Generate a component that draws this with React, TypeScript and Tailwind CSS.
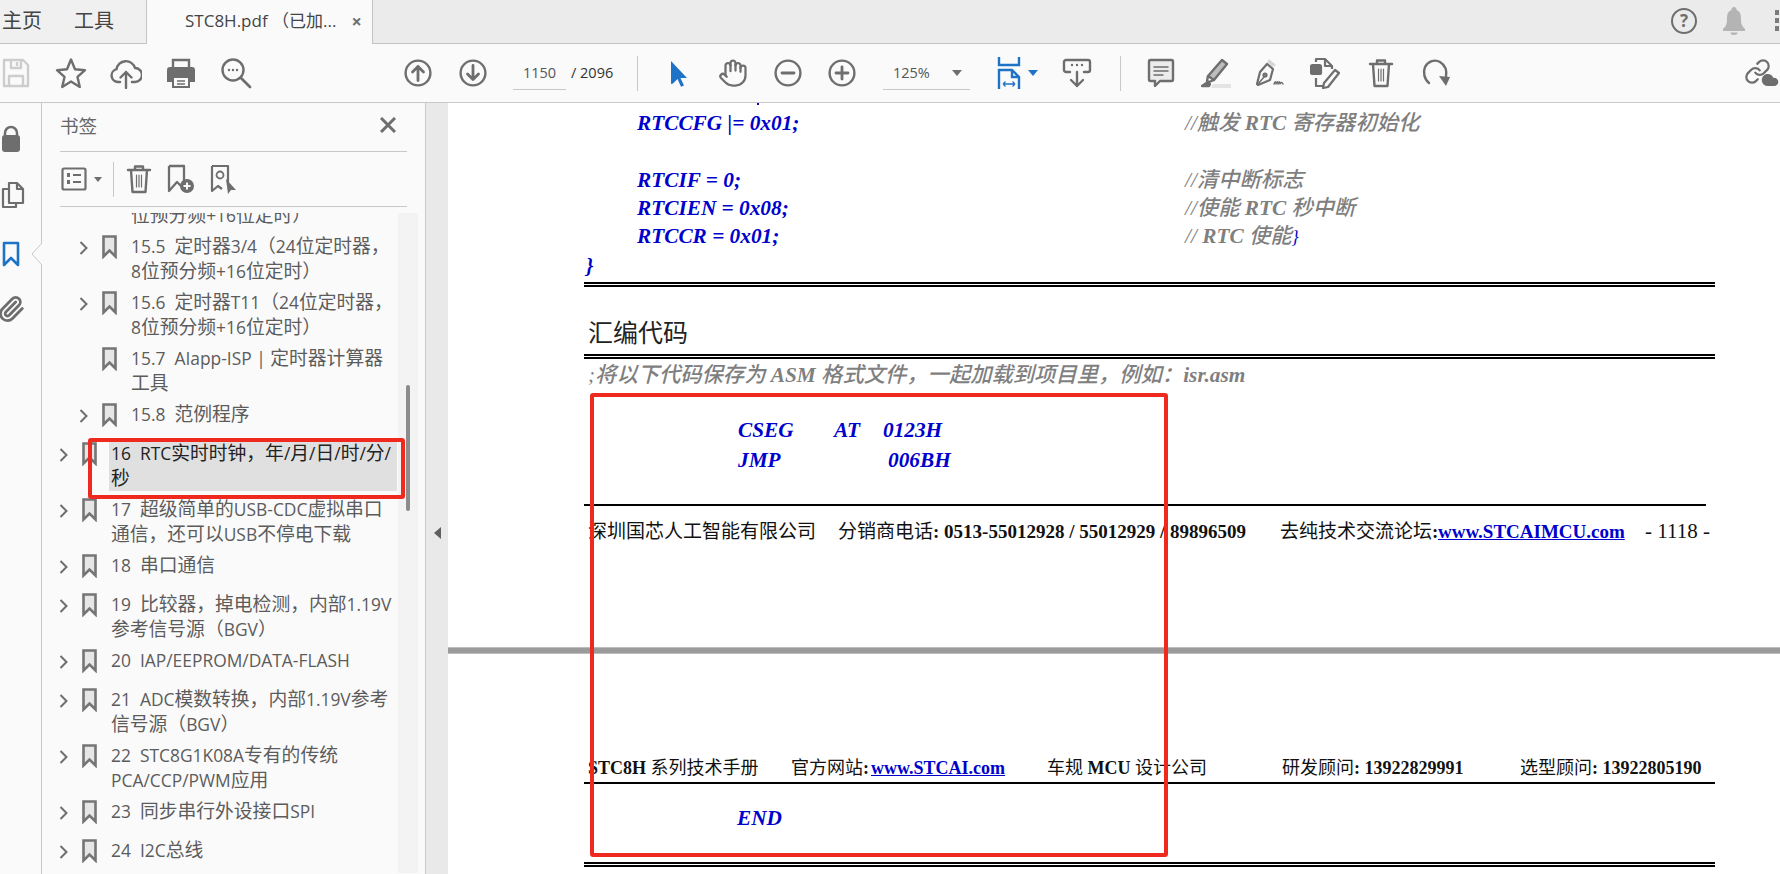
import type { ReactNode } from "react";
import { Hand, Link, Cloud, Paperclip } from "lucide-react";

const bookmarks = [
    { level: 2, arrow: true, lines: ["15.5  定时器3/4（24位定时器，", "8位预分频+16位定时）"] },
    { level: 2, arrow: true, lines: ["15.6  定时器T11（24位定时器，", "8位预分频+16位定时）"] },
    { level: 2, arrow: false, lines: ["15.7  AIapp-ISP | 定时器计算器", "工具"] },
    { level: 2, arrow: true, lines: ["15.8  范例程序"] },
    { level: 1, arrow: true, active: true, lines: ["16  RTC实时时钟，年/月/日/时/分/", "秒"] },
    { level: 1, arrow: true, lines: ["17  超级简单的USB-CDC虚拟串口", "通信，还可以USB不停电下载"] },
    { level: 1, arrow: true, lines: ["18  串口通信"] },
    { level: 1, arrow: true, lines: ["19  比较器，掉电检测，内部1.19V", "参考信号源（BGV）"] },
    { level: 1, arrow: true, lines: ["20  IAP/EEPROM/DATA-FLASH"] },
    { level: 1, arrow: true, lines: ["21  ADC模数转换，内部1.19V参考", "信号源（BGV）"] },
    { level: 1, arrow: true, lines: ["22  STC8G1K08A专有的传统", "PCA/CCP/PWM应用"] },
    { level: 1, arrow: true, lines: ["23  同步串行外设接口SPI"] },
    { level: 1, arrow: true, lines: ["24  I2C总线"] },
];

// CJK runs sit a little larger than the latin text in the reader's UI font
function Mixed({ text }: { text: string }) {
    return (
        <>
            {text.split(/([\u3000-\u30ff\u4e00-\u9fff\uff00-\uffef]+)/).map((part, i) =>
                i % 2 ? (
                    <span key={i} className="text-[18.8px]">
                        {part}
                    </span>
                ) : (
                    part
                ),
            )}
        </>
    );
}

function Icon({ children, w = 32, h = 32, className = "" }: { children: ReactNode; w?: number; h?: number; className?: string }) {
    return (
        <svg
            width={w}
            height={h}
            viewBox={`0 0 ${w} ${h}`}
            fill="none"
            stroke="#6e6e6e"
            strokeWidth="2.4"
            strokeLinejoin="round"
            strokeLinecap="round"
            className={className}
        >
            {children}
        </svg>
    );
}

function Cell({ children, className = "" }: { children: ReactNode; className?: string }) {
    return <div className={`flex h-8 w-8 shrink-0 items-center justify-center ${className}`}>{children}</div>;
}

const TrashIcon = () => (
    <Icon w={26} h={30}>
        <path d="M2 6h22M9 6V2.5h8V6M5 6l1.5 22h13L21 6" />
        <path d="M10.5 11v12M13 11v12M15.5 11v12" strokeWidth="1.2" />
    </Icon>
);

function BookmarkGlyph() {
    return (
        <svg width="15" height="24" viewBox="0 0 15 24" fill="#e6e6e6" stroke="#757575" strokeWidth="2.6" className="mt-[1px] shrink-0">
            <path d="M1.5 1.5h12v20l-6-6-6 6z" />
        </svg>
    );
}

function BookmarkRow({ level, arrow, active, lines }: { level: number; arrow: boolean; active?: boolean; lines: string[] }) {
    return (
        <div className={`flex shrink-0 items-start pt-[3px] ${lines.length > 1 ? "h-[56px]" : "h-[39px]"} ${level === 2 ? "pl-[37px]" : "pl-[17px]"}`}>
            <div className="flex w-[23px] shrink-0 pt-[7px]">
                {arrow && (
                    <svg width="9" height="14" viewBox="0 0 9 14" fill="none" stroke="#6e6e6e" strokeWidth="2">
                        <path d="M1.5 1l6 6-6 6" />
                    </svg>
                )}
            </div>
            <BookmarkGlyph />
            <div className={`ml-[12px] pl-[2px] text-[17.4px] leading-[25px] whitespace-pre ${active ? "h-[50px] w-[288px] bg-[#e0e0e0] text-[#222222]" : "text-[#5c5c5c]"}`}>
                {lines.map((line) => (
                    <div key={line} className="h-[25px]">
                        <Mixed text={line} />
                    </div>
                ))}
            </div>
        </div>
    );
}

function TabBar() {
    return (
        <div className="flex h-[44px] shrink-0 bg-[#ebebeb]">
            <div className="flex w-[147px] items-center border-r border-b border-[#c4c4c4] bg-[#f0f0f0] pb-[2px] text-[20px] text-[#444444]">
                <span className="ml-[2px]">主页</span>
                <span className="ml-[32px]">工具</span>
            </div>
            <div className="flex w-[225px] items-center bg-[#fafafa] pb-[2px] pl-[38px] text-[17px] whitespace-pre text-[#444444]">
                STC8H.pdf （已加...
                <span className="ml-[15px] text-[18px] font-bold text-[#6e6e6e]">×</span>
            </div>
            <div className="flex flex-1 items-center justify-end border-b border-l border-[#c4c4c4] pb-[2px]">
                <div className="mr-[26px] flex h-[26px] w-[26px] items-center justify-center rounded-full border-2 border-[#6e6e6e] text-[17px] font-bold text-[#6e6e6e]">?</div>
                <svg width="22" height="28" viewBox="0 0 22 28" fill="#b4b4b4" className="mr-[30px]">
                    <path d="M11 0a2.5 2.5 0 0 1 2.5 3C18 4.500 18 9 18 13c0 4 1 6 4 9v2H0v-2c3-3 4-5 4-9 0-4 0-8.500 4.500-10A2.500 2.500 0 0 1 11 0zM7.500 25.500h7a3.500 2.500 0 0 1-7 0z" />
                </svg>
                <div className="mr-[1px] flex flex-col gap-[3px]">
                    <div className="h-[5px] w-[4px] bg-[#7a7a7a]" />
                    <div className="h-[5px] w-[4px] bg-[#7a7a7a]" />
                    <div className="h-[5px] w-[4px] bg-[#7a7a7a]" />
                </div>
            </div>
        </div>
    );
}

function CircleIcon({ children }: { children: ReactNode }) {
    return (
        <Icon w={28} h={28}>
            <circle cx="14" cy="14" r="12.400" />
            {children}
        </Icon>
    );
}

function Toolbar() {
    return (
        <div className="flex h-[59px] shrink-0 items-center border-b border-[#c8c8c8] bg-[#fafafa]">
            <Cell>
                <svg width="28" height="30" viewBox="0 0 28 30" fill="none" stroke="#cdcdcd" strokeWidth="2.4" strokeLinejoin="round">
                    <path d="M2 2h19l5 5v21H2z" />
                    <path d="M9 2v8h10V2M15 4v4M7 28V18h14v10" />
                </svg>
            </Cell>
            <Cell className="ml-[23px]">
                <Icon>
                    <path d="M16 2.500l4 9.800 10 .9-7.500 6.700 2.300 10L16 24.500l-8.800 5.400 2.300-10L2 13.200l10-.9z" />
                </Icon>
            </Cell>
            <Cell className="ml-[23px]">
                <Icon>
                    <path d="M10 25H8a6.500 6.500 0 0 1-1.500-12.800A9.500 9.500 0 0 1 25 11a7 7 0 0 1 0 14h-3" />
                    <path d="M16 31V15M10.500 20.500L16 15l5.500 5.500" />
                </Icon>
            </Cell>
            <Cell className="ml-[23px]">
                <svg width="28" height="30" viewBox="0 0 28 30">
                    <path d="M6 9V2h16v7" fill="none" stroke="#6e6e6e" strokeWidth="2.400" />
                    <path d="M3 9h22a3 3 0 0 1 3 3v12h-5v-6H5v6H0V12a3 3 0 0 1 3-3z" fill="#6e6e6e" />
                    <path d="M6 19h16v10H6z" fill="#fafafa" stroke="#6e6e6e" strokeWidth="2" />
                    <path d="M10 23h8M10 26h8" stroke="#6e6e6e" strokeWidth="1.500" />
                </svg>
            </Cell>
            <Cell className="ml-[23px]">
                <Icon>
                    <circle cx="13" cy="13" r="10.500" />
                    <path d="M21 21l9 9" strokeWidth="2.800" />
                    <path d="M9 13h.01M13 13h.01M17 13h.01" strokeWidth="2.400" />
                </Icon>
            </Cell>
            <Cell className="ml-[150px]">
                <CircleIcon>
                    <path d="M14 21.500V7.500M8.500 13L14 7.500l5.500 5.500" strokeWidth="2.800" />
                </CircleIcon>
            </Cell>
            <Cell className="ml-[23px]">
                <CircleIcon>
                    <path d="M14 6.500v14M8.500 15l5.500 5.500 5.500-5.500" strokeWidth="2.800" />
                </CircleIcon>
            </Cell>
            <div className="ml-[24px] flex h-[34px] w-[53px] shrink-0 items-center justify-center border-b border-[#c8c8c8] text-[14.500px] text-[#555555]">1150</div>
            <div className="ml-[5px] w-[61px] shrink-0 text-[14.500px] whitespace-pre text-[#333333]">/ 2096</div>
            <div className="ml-[5px] h-[35px] w-px shrink-0 bg-[#c8c8c8]" />
            <Cell className="ml-[25px]">
                <svg width="18" height="27" viewBox="0 0 18 27" fill="#1f73c7">
                    <path d="M1 1l16 17h-6.500l3.500 7.500-3 1.300-3.500-7.800L3 23.500 1 24z" />
                </svg>
            </Cell>
            <Cell className="ml-[22px]">
                <Hand size={30} color="#6e6e6e" strokeWidth={1.8} />
            </Cell>
            <Cell className="ml-[23px]">
                <CircleIcon>
                    <path d="M8 14h12" strokeWidth="2.800" />
                </CircleIcon>
            </Cell>
            <Cell className="ml-[22px]">
                <CircleIcon>
                    <path d="M8 14h12M14 8v12" strokeWidth="2.800" />
                </CircleIcon>
            </Cell>
            <div className="ml-[25px] flex h-[34px] w-[87px] shrink-0 items-center border-b border-[#c8c8c8] pl-[10px] text-[14.500px] text-[#555555]">
                125%
                <span className="ml-[22px] h-0 w-0 border-x-[5px] border-t-[6px] border-x-transparent border-t-[#6e6e6e]" />
            </div>
            <Cell className="ml-[23px]">
                <svg width="24" height="32" viewBox="0 0 24 32" fill="none" stroke="#1f73c7" strokeWidth="2.400">
                    <path d="M2 0v8h20V0" />
                    <path d="M2 32V13h13l7 7v12M15 13v7h7" />
                    <path d="M6 27h12M6 27l2.500-2.500M6 27l2.500 2.500M18 27l-2.500-2.500M18 27l-2.500 2.500" strokeWidth="1.300" />
                </svg>
            </Cell>
            <span className="ml-[3px] h-0 w-0 shrink-0 border-x-[5px] border-t-[6px] border-x-transparent border-t-[#1f73c7]" />
            <Cell className="ml-[23px]">
                <Icon w={30} h={30}>
                    <path d="M8 14H4a2 2 0 0 1-2-2V4a2 2 0 0 1 2-2h22a2 2 0 0 1 2 2v8a2 2 0 0 1-2 2h-4" />
                    <path d="M15 7v.01M20 7v.01M10 7v.01" />
                    <path d="M15 14v14M9 22l6 6 6-6" />
                </Icon>
            </Cell>
            <div className="ml-[27px] h-[35px] w-px shrink-0 bg-[#c8c8c8]" />
            <Cell className="ml-[24px]">
                <Icon w={28} h={30}>
                    <path d="M3.500 2h21A1.500 1.500 0 0 1 26 3.500v18a1.500 1.500 0 0 1-1.500 1.500H13l-5 5v-5H3.500A1.500 1.500 0 0 1 2 21.500v-18A1.500 1.500 0 0 1 3.500 2z" fill="#ececec" />
                    <path d="M7 9h14M7 13h14M7 17h9" strokeWidth="1.500" />
                </Icon>
            </Cell>
            <Cell className="ml-[23px]">
                <svg width="30" height="30" viewBox="0 0 30 30" fill="none" stroke="#6e6e6e" strokeWidth="2.400" strokeLinejoin="round">
                    <path d="M21 2l5 4-13 16-6-4z" fill="#bdbdbd" />
                    <path d="M7 18l-1 5 2 1 5-2" />
                    <path d="M1 28l6-4 2 2-1 2z" fill="#6e6e6e" />
                    <path d="M12 26h18v4H10z" fill="#e4e4e4" stroke="none" />
                </svg>
            </Cell>
            <Cell className="ml-[22px]">
                <svg width="30" height="30" viewBox="0 0 30 30" fill="none" stroke="#6e6e6e" strokeWidth="2.200" strokeLinejoin="round" strokeLinecap="round">
                    <path d="M14 1l7 6-3 2-6-4z" fill="#d8d8d8" stroke="none" />
                    <path d="M12 6l6 5-3 11-12 5-1-1 3-12z" />
                    <path d="M3 26l6-7" strokeWidth="1.500" />
                    <circle cx="10" cy="17" r="1.500" />
                    <path d="M19 26c1-3 2-3 2 0 1-3 2-3 2 0 1-3 2-3 2 0 1-2 2-2 3 0" strokeWidth="1.500" />
                </svg>
            </Cell>
            <Cell className="ml-[23px]">
                <svg width="30" height="32" viewBox="0 0 30 32" fill="none" stroke="#6e6e6e" strokeWidth="2.200" strokeLinejoin="round">
                    <path d="M6 5V2h9l7 7v3" />
                    <path d="M15 2v7h7" />
                    <rect x="1" y="8" width="10" height="9" rx="1.500" fill="#6e6e6e" />
                    <path d="M6 21v8h8" />
                    <path d="M25 13l4 3-11 14-5 1 1-5z" />
                </svg>
            </Cell>
            <Cell className="ml-[24px]">
                <TrashIcon />
            </Cell>
            <Cell className="ml-[23px]">
                <svg width="28" height="30" viewBox="0 0 28 30" fill="none" stroke="#6e6e6e" strokeWidth="2.400" strokeLinecap="round">
                    <path d="M7 25C2 21 1 14 3 9c3-6 10-8 15-5 5 3 7 9 6 15" />
                    <path d="M17 18l7 10 4-9z" fill="#6e6e6e" stroke="none" />
                </svg>
            </Cell>
            <Cell className="mr-[3px] ml-auto">
                <div className="relative h-8 w-8">
                    <Link size={27} color="#6e6e6e" strokeWidth={2} className="absolute top-[1px] left-[-1px]" />
                    <Cloud size={18} color="#6e6e6e" fill="#6e6e6e" className="absolute right-[-2px] bottom-0" />
                </div>
            </Cell>
        </div>
    );
}

function LeftRail() {
    return (
        <div className="relative flex w-[42px] shrink-0 flex-col items-center border-r border-[#c8c8c8] bg-[#fafafa] pr-[19px] pl-0">
            <svg width="20" height="28" viewBox="0 0 20 28" className="mt-[22px] shrink-0">
                <path d="M4 11V8a6 6 0 0 1 12 0v3" fill="none" stroke="#6e6e6e" strokeWidth="2.500" />
                <rect x="1" y="10" width="18" height="17" rx="3" fill="#6e6e6e" />
            </svg>
            <svg width="24" height="28" viewBox="0 0 24 28" fill="none" stroke="#6e6e6e" strokeWidth="2.200" strokeLinejoin="round" className="mt-[28px] ml-[3px] shrink-0">
                <path d="M8 2h8l6 6v14H8z" />
                <path d="M16 2v6h6" />
                <path d="M8 8H2v18h13v-4" />
            </svg>
            <svg width="18" height="27" viewBox="0 0 18 27" fill="none" stroke="#1f73c7" strokeWidth="2.600" strokeLinejoin="round" className="mt-[32px] shrink-0">
                <path d="M2 2h14v22l-7-7-7 7z" />
            </svg>
            <Paperclip size={28} color="#6e6e6e" strokeWidth={2.400} className="mt-[27px] shrink-0" />
            <svg width="11" height="24" viewBox="0 0 11 24" fill="#fafafa" stroke="#c8c8c8" className="absolute top-[139px] right-[-1px]">
                <path d="M11 1L1 12l10 11" />
            </svg>
        </div>
    );
}

function BookmarkPanel() {
    return (
        <div className="relative flex w-[384px] shrink-0 flex-col border-r border-[#c8c8c8] bg-[#fafafa]">
            <div className="mx-[18px] flex h-[49px] shrink-0 items-center justify-between border-b border-[#c8c8c8] pb-[2px] text-[18.600px] text-[#666666]">
                书签
                <svg width="16" height="16" viewBox="0 0 16 16" stroke="#6e6e6e" strokeWidth="3" className="mr-[11px] mb-[2px]">
                    <path d="M1 1l14 14M15 1L1 15" />
                </svg>
            </div>
            <div className="mx-[18px] flex h-[55px] shrink-0 items-center border-b border-[#c8c8c8]">
                <svg width="26" height="24" viewBox="0 0 26 24" fill="none" stroke="#6e6e6e" strokeWidth="2.200" className="ml-[1px]">
                    <rect x="1.500" y="1.500" width="23" height="21" rx="1.500" />
                    <path d="M6 8h3M6 15h3" strokeWidth="4" />
                    <path d="M12 8h8M12 15h8" />
                </svg>
                <span className="ml-[7px] h-0 w-0 border-x-[4px] border-t-[5px] border-x-transparent border-t-[#6e6e6e]" />
                <div className="ml-[11px] h-[35px] w-px bg-[#c8c8c8]" />
                <div className="ml-[12px]">
                    <TrashIcon />
                </div>
                <svg width="28" height="30" viewBox="0 0 28 30" fill="none" stroke="#6e6e6e" strokeWidth="2.300" strokeLinejoin="round" className="ml-[15px]">
                    <path d="M2 2h15v15M14 22l-4-4-8 9V2" />
                    <circle cx="20" cy="22" r="7" fill="#6e6e6e" stroke="none" />
                    <path d="M16.500 22h7M20 18.500v7" stroke="#fafafa" strokeWidth="2" />
                </svg>
                <svg width="28" height="30" viewBox="0 0 28 30" fill="none" stroke="#6e6e6e" strokeWidth="2.200" strokeLinejoin="round" className="ml-[15px]">
                    <path d="M2 2h16v17M2 2v25l6-5 4 3" />
                    <circle cx="10" cy="11" r="3.500" strokeWidth="1.800" />
                    <path d="M16 15l10 11h-5l-3 4z" fill="#6e6e6e" stroke="none" />
                </svg>
            </div>
            <div className="flex min-h-0 flex-1 pt-[6px]">
                <div className="flex h-[660px] w-[356px] shrink-0 flex-col overflow-hidden">
                    <div className="-mt-[38px] flex h-[56px] shrink-0 items-start pt-[3px] pl-[89px] text-[17.4px] leading-[25px] whitespace-pre text-[#5c5c5c]">
                        <div className="pt-[25px]">
                            <Mixed text="位预分频+16位定时）" />
                        </div>
                    </div>
                    {bookmarks.map((item) => (
                        <BookmarkRow key={item.lines[0]} {...item} />
                    ))}
                </div>
                <div className="flex h-[660px] w-[20px] shrink-0 justify-center bg-[#f3f3f3]">
                    <div className="mt-[172px] h-[126px] w-[4px] rounded-full bg-[#8c8c8c]" />
                </div>
            </div>
            <div className="absolute top-[335px] left-[46px] z-10 h-[61px] w-[317px] rounded-[3px] border-[4px] border-[#f0291e]" />
        </div>
    );
}

const serif = "font-['Liberation_Serif','Noto_Sans_CJK_SC',serif]";

function CodeRow({ code, note, className = "" }: { code: string; note?: ReactNode; className?: string }) {
    return (
        <div className={`ml-[136px] flex items-center text-[21.300px] whitespace-pre italic ${className}`}>
            <div className="w-[601px] shrink-0 pl-[53px] font-bold text-[#0000cc]">{code}</div>
            {note && <div className="font-medium text-[#7f7f7f]">{note}</div>}
        </div>
    );
}

function DoubleRule({ className = "" }: { className?: string }) {
    return <div className={`ml-[136px] h-[5px] w-[1131px] shrink-0 border-y-2 border-black ${className}`} />;
}

function PdfLink({ children }: { children: ReactNode }) {
    return <span className="font-bold text-[#0000cc] underline">{children}</span>;
}

function PdfView() {
    return (
        <div className={`relative min-w-0 flex-1 overflow-hidden bg-white ${serif}`}>
            <div className="ml-[309px] flex h-[7px] items-start">
                <div className="h-[2px] w-[2px] bg-[#0000cc]" />
            </div>
            <CodeRow
                className="h-[28px]"
                code="RTCCFG |= 0x01;"
                note={
                    <>
                        //触发 <b>RTC</b> 寄存器初始化
                    </>
                }
            />
            <CodeRow className="mt-[29px] h-[28px]" code="RTCIF = 0;" note="//清中断标志" />
            <CodeRow
                className="h-[28px]"
                code="RTCIEN = 0x08;"
                note={
                    <>
                        //使能 <b>RTC</b> 秒中断
                    </>
                }
            />
            <CodeRow
                className="h-[28px]"
                code="RTCCR = 0x01;"
                note={
                    <>
                        // <b>RTC</b> 使能<span className="text-[18px] font-normal text-[#0000cc]">{"}"}</span>
                    </>
                }
            />
            <div className="ml-[138px] flex h-[31px] items-center text-[21.300px] font-bold text-[#0000cc] italic">{"}"}</div>
            <DoubleRule />
            <div className="mt-[30px] ml-[140px] flex h-[34px] items-center text-[25px] text-[#222222]">汇编代码</div>
            <DoubleRule className="mt-[3px]" />
            <div className="ml-[140px] flex h-[34px] items-center text-[21.300px] font-medium whitespace-pre text-[#7f7f7f] italic">
                ;将以下代码保存为 <b>ASM</b> 格式文件，一起加载到项目里，例如：<b>isr.asm</b>
            </div>

            <div className="mt-[24px] ml-[290px] flex h-[28px] items-center text-[21.300px] font-bold text-[#0000cc] italic">
                <div className="w-[96px] shrink-0">CSEG</div>
                <div className="w-[49px] shrink-0">AT</div>
                <div>0123H</div>
            </div>
            <div className="mt-[2px] ml-[290px] flex h-[28px] items-center text-[21.300px] font-bold text-[#0000cc] italic">
                <div className="w-[150px] shrink-0">JMP</div>
                <div>006BH</div>
            </div>

            <div className="mt-[29px] ml-[136px] h-[2px] w-[1122px] bg-black" />
            <div className="mt-[12px] ml-[140px] flex h-[28px] items-center text-[19px] whitespace-pre text-[#111111]">
                <div className="w-[250px] shrink-0">深圳国芯人工智能有限公司</div>
                <div className="w-[442px] shrink-0">
                    分销商电话<b>: 0513-55012928 / 55012929 / 89896509</b>
                </div>
                <div className="w-[158px] shrink-0">
                    去纯技术交流论坛<b>:</b>
                </div>
                <div className="w-[207px] shrink-0">
                    <PdfLink>www.STCAIMCU.com</PdfLink>
                </div>
                <div className="text-[21px]">- 1118 -</div>
            </div>

            <div className="mt-[101px] h-[7px] border-y border-[#bdbdbd] bg-[#9b9b9b]" />

            <div className="mt-[100px] ml-[140px] flex h-[28px] items-center text-[18px] whitespace-pre text-[#111111]">
                <div className="w-[203px] shrink-0">
                    <b>STC8H</b> 系列技术手册
                </div>
                <div className="w-[80px] shrink-0">
                    官方网站<b>:</b>
                </div>
                <div className="w-[176px] shrink-0">
                    <PdfLink>www.STCAI.com</PdfLink>
                </div>
                <div className="w-[235px] shrink-0">
                    车规 <b>MCU</b> 设计公司
                </div>
                <div className="w-[238px] shrink-0">
                    研发顾问<b>: 13922829991</b>
                </div>
                <div>
                    选型顾问<b>: 13922805190</b>
                </div>
            </div>
            <div className="ml-[136px] h-[2px] w-[1131px] bg-black" />
            <div className="mt-[21px] ml-[289px] flex h-[28px] items-center text-[21.300px] font-bold text-[#0000cc] italic">END</div>
            <DoubleRule className="mt-[29px]" />

            <div className="absolute top-[290px] left-[142px] h-[464px] w-[578px] rounded-[3px] border-[4px] border-[#f0291e]" />
        </div>
    );
}

export default function App() {
    return (
        <div className="flex h-[874px] w-full flex-col overflow-hidden bg-white font-['Open_Sans','Noto_Sans_CJK_SC',sans-serif]">
            <TabBar />
            <Toolbar />
            <div className="flex min-h-0 flex-1">
                <LeftRail />
                <BookmarkPanel />
                <div className="flex w-[22px] shrink-0 flex-col items-center bg-[#e9e9e9] pt-[424px]">
                    <span className="h-0 w-0 border-y-[6px] border-r-[7px] border-y-transparent border-r-[#5f5f5f]" />
                </div>
                <PdfView />
            </div>
        </div>
    );
}
